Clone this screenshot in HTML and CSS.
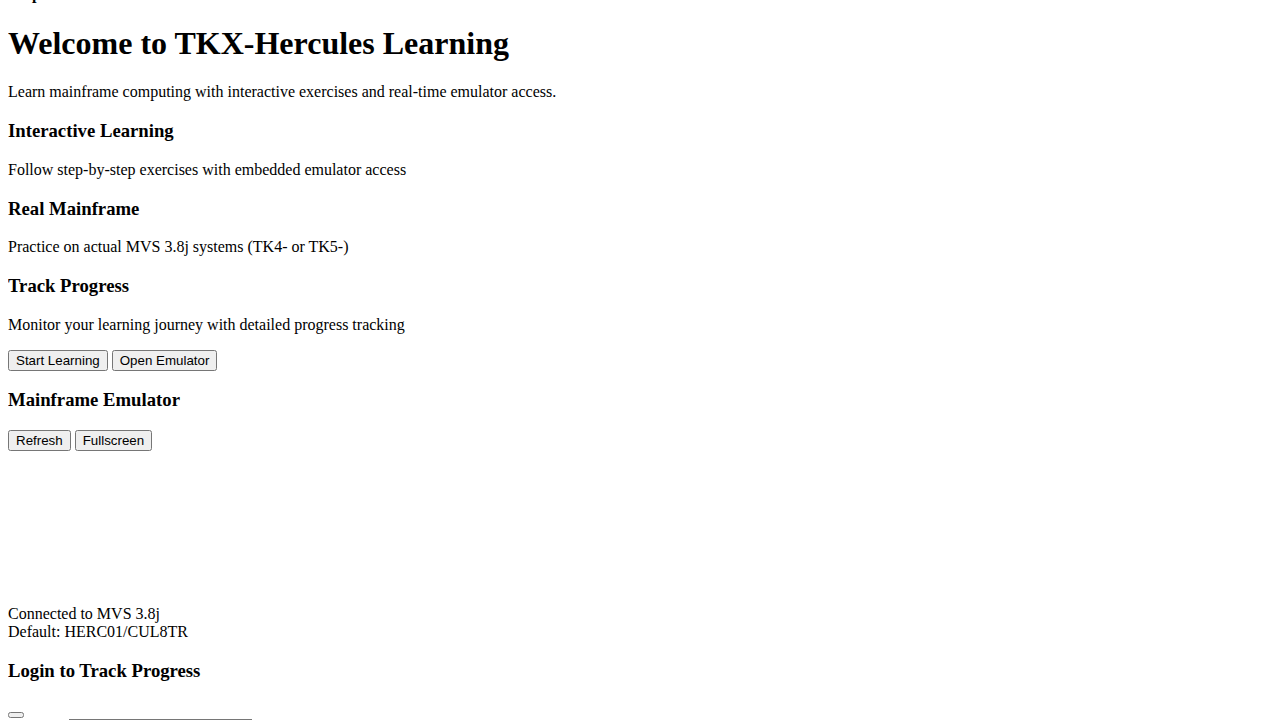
FILE: index.html
```html
<!DOCTYPE html>
<html lang="en">
<head>
<meta charset="utf-8">
<title>TKX-Hercules Learning</title>
<link rel="stylesheet" href="styles.css">
</head>
<body>
<header class="site-header">
  <div class="brand">TKX-Hercules</div>
  <nav class="site-nav">
    <div class="nav-item">Home</div>
    <div class="nav-item">Help</div>
  </nav>
</header>
<main class="content">
  <section class="hero">
    <h1 class="hero-title">Welcome to TKX-Hercules Learning</h1>
    <p class="hero-text">Learn mainframe computing with interactive exercises and real-time emulator access.</p>
    <div class="features">
      <div class="feature">
        <h3 class="feature-title">Interactive Learning</h3>
        <p class="feature-text">Follow step-by-step exercises with embedded emulator access</p>
      </div>
      <div class="feature">
        <h3 class="feature-title">Real Mainframe</h3>
        <p class="feature-text">Practice on actual MVS 3.8j systems (TK4- or TK5-)</p>
      </div>
      <div class="feature">
        <h3 class="feature-title">Track Progress</h3>
        <p class="feature-text">Monitor your learning journey with detailed progress tracking</p>
      </div>
    </div>
    <div class="hero-actions"><button class="btn">Start Learning</button> <button class="btn">Open Emulator</button></div>
  </section>
  <section class="emulator">
    <h3 class="section-title">Mainframe Emulator</h3>
    <div class="emulator-controls"><button class="btn">Refresh</button> <button class="btn">Fullscreen</button></div>
    <div class="emulator-screen"><iframe class="emulator-frame" title="Mainframe emulator"></iframe></div>
    <div class="emulator-status">
      <div class="status-line">Connected to MVS 3.8j</div>
      <div class="status-line">Default: HERC01/CUL8TR</div>
    </div>
  </section>
  <section class="login">
    <h3 class="section-title">Login to Track Progress</h3>
    <form class="login-form">
      <div class="login-tabs"><button type="button" class="btn tab"></button></div>
      <div class="field"><label class="field-label" for="userid">User ID:</label> <input class="field-input" id="userid" type="text"></div>
      <div class="field"><label class="field-label" for="pass">Password:</label> <input class="field-input" id="pass" type="password"></div>
      <div class="field"><button type="submit" class="btn">Login</button></div>
    </form>
  </section>
</main>
<script src="script.js"></script>
</body>
</html>
```

FILE: styles.css
```css
html {
  background: #ffffff;
}
body {
  margin: 8px;
  font-family: "Liberation Serif", "Times New Roman", serif;
  font-size: 16px;
  color: #000000;
}
.site-header {
  padding-bottom: 0.5px;
}
.brand,
.nav-item {
  font-weight: bold;
}
.hero-title {
  font-size: 32px;
  margin: 21.44px 0;
}
.feature-title,
.section-title {
  font-size: 18.72px;
  margin: 18.72px 0;
}
.hero-text,
.feature-text {
  margin: 16px 0;
}
.btn {
  font-family: "Liberation Sans", Arial, sans-serif;
  font-size: 13.333px;
}
.emulator-frame {
  border: 0;
  width: 300px;
  height: 150px;
  background: #ffffff;
}
.field-input {
  font-family: "Liberation Sans", Arial, sans-serif;
  font-size: 13.333px;
}
```

FILE: script.js
```js
window.scrollTo(0, 59);
window.addEventListener('load', function () { window.scrollTo(0, 59); });
```
